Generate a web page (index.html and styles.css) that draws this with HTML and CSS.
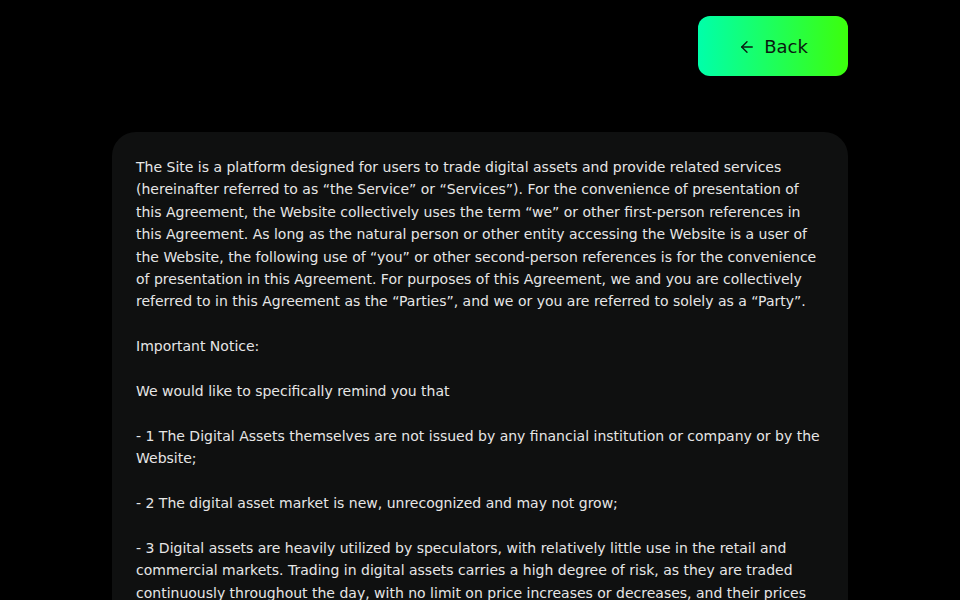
FILE: index.html
```html
<!DOCTYPE html>
<html lang="en">
<head>
<meta charset="utf-8">
<title>Agreement</title>
<link rel="stylesheet" href="styles.css">
</head>
<body>
<div class="page">
  <div class="top">
    <button class="back">
      <svg class="arrow" width="18" height="18" viewBox="0 0 24 24" fill="none" stroke="currentColor" stroke-width="1.8" stroke-linecap="round" stroke-linejoin="round"><path d="M19 12H5"/><path d="M12 19l-7-7 7-7"/></svg>
      <span class="label">Back</span>
    </button>
  </div>
  <div class="card">
    <p>The Site is a platform designed for users to trade digital assets and provide related services (hereinafter referred to as “the Service” or “Services”). For the convenience of presentation of this Agreement, the Website collectively uses the term “we” or other first-person references in this Agreement. As long as the natural person or other entity accessing the Website is a user of the Website, the following use of “you” or other second-person references is for the convenience of presentation in this Agreement. For purposes of this Agreement, we and you are collectively referred to in this Agreement as the “Parties”, and we or you are referred to solely as a “Party”.</p>
    <p>Important Notice:</p>
    <p>We would like to specifically remind you that</p>
    <p>- 1 The Digital Assets themselves are not issued by any financial institution or company or by the Website;</p>
    <p>- 2 The digital asset market is new, unrecognized and may not grow;</p>
    <p>- 3 Digital assets are heavily utilized by speculators, with relatively little use in the retail and commercial markets. Trading in digital assets carries a high degree of risk, as they are traded continuously throughout the day, with no limit on price increases or decreases, and their prices are easily influenced by market makers and global government policies, resulting in significant price fluctuations;</p>
  </div>
</div>
</body>
</html>
```

FILE: styles.css
```css
html, body {
  margin: 0;
  padding: 0;
  background: #000;
}
body {
  font-family: "DejaVu Sans", sans-serif;
  color: #e6e6e6;
}
.page {
  width: 736px;
  margin: 0 auto;
  padding-top: 16px;
}
.top {
  display: flex;
  justify-content: flex-end;
}
.back {
  width: 150px;
  height: 60px;
  border: none;
  border-radius: 12px;
  background: linear-gradient(90deg, #00ffaa 0%, #3cff0c 100%);
  color: #0a1a10;
  font-family: "DejaVu Sans", sans-serif;
  font-size: 18px;
  line-height: 1;
  display: flex;
  align-items: center;
  justify-content: center;
  gap: 8px;
  padding: 1px 0 0 0;
  cursor: pointer;
}
.arrow {
  display: block;
}
.label {
  display: block;
}
.card {
  margin-top: 56px;
  background: #0f1010;
  border-radius: 24px;
  padding: 24px 24px;
  font-size: 14px;
  line-height: 22.4px;
}
.card p {
  margin: 0 0 22.4px 0;
}
```
